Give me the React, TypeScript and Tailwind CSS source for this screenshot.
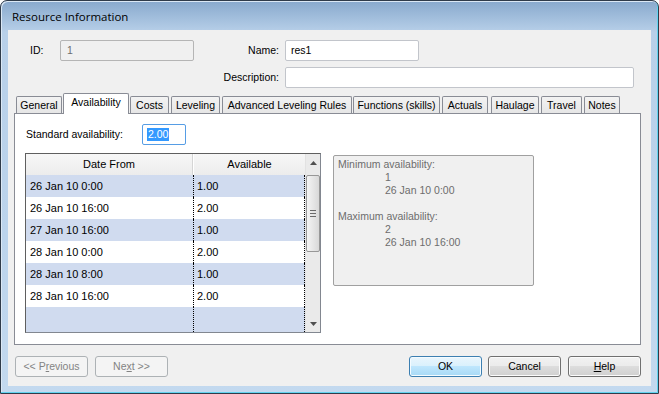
import React from 'react';

type Tab = { label: string; width: string; gap: string; active?: boolean };

const tabs: Tab[] = [
  { label: 'General', width: 'w-[46px]', gap: 'ml-[2px]' },
  { label: 'Availability', width: 'w-[66px]', gap: 'ml-[1px]', active: true },
  { label: 'Costs', width: 'w-[39px]', gap: 'ml-[1px]' },
  { label: 'Leveling', width: 'w-[49px]', gap: 'ml-[2px]' },
  { label: 'Advanced Leveling Rules', width: 'w-[130px]', gap: 'ml-[2px]' },
  { label: 'Functions (skills)', width: 'w-[87px]', gap: 'ml-[1px]' },
  { label: 'Actuals', width: 'w-[46px]', gap: 'ml-[2px]' },
  { label: 'Haulage', width: 'w-[48px]', gap: 'ml-[3px]' },
  { label: 'Travel', width: 'w-[41px]', gap: 'ml-[2px]' },
  { label: 'Notes', width: 'w-[36px]', gap: 'ml-[2px]' },
];

const rows = [
  { date: '26 Jan 10 0:00', value: '1.00' },
  { date: '26 Jan 10 16:00', value: '2.00' },
  { date: '27 Jan 10 16:00', value: '1.00' },
  { date: '28 Jan 10 0:00', value: '2.00' },
  { date: '28 Jan 10 8:00', value: '1.00' },
  { date: '28 Jan 10 16:00', value: '2.00' },
];

const btn =
  'w-[73px] h-[21px] rounded-[3px] border flex items-center justify-center text-[10.5px]';
const btnNormal =
  'border-[#707070] text-black bg-[linear-gradient(#f2f2f2,#ebebeb_50%,#dddddd_50%,#cfcfcf)] shadow-[inset_0_0_0_1px_#fbfbfb]';
const btnDefault =
  'border-[#3c7fb1] text-black bg-[linear-gradient(#eaf6fd,#d9f0fc_50%,#bee6fd_50%,#a7d9f5)] shadow-[inset_0_0_0_1px_#f4fbff]';
const btnDisabled = 'border-[#adb2b5] text-[#838383] bg-[#f4f4f4]';

function Arrow({ down }: { down?: boolean }) {
  return (
    <svg width="7" height="4" viewBox="0 0 7 4">
      <path d={down ? 'M0 0 L7 0 L3.5 4 Z' : 'M0 4 L3.5 0 L7 4 Z'} fill="#505050" />
    </svg>
  );
}

function Grid() {
  return (
    <div className="flex w-[296px] h-[180px] border border-[#828790] border-l-[#5f5f5f] border-t-[#5f5f5f] bg-white">
      <div className="flex flex-col w-[279px]">
        <div className="flex h-[21px] bg-[linear-gradient(#f7f7f7,#ececec)] text-[11px] text-black">
          <div className="w-[167px] flex items-center justify-center border-r border-[#d5d5d5]">Date From</div>
          <div className="flex-1 flex items-center justify-center border-l border-white">Available</div>
        </div>
        {rows.map((r, i) => (
          <div
            key={i}
            className={`flex h-[22px] text-[11px] text-black ${i % 2 === 0 ? 'bg-[#d0dbef]' : 'bg-white'}`}
          >
            <div className="w-[168px] pl-[4px] leading-[22px] border-r border-dotted border-black">{r.date}</div>
            <div className="flex-1 pl-[3px] leading-[22px] border-r border-dotted border-black">{r.value}</div>
          </div>
        ))}
        <div className="flex flex-1 bg-[#d0dbef]">
          <div className="w-[168px] border-r border-dotted border-black" />
          <div className="flex-1 border-r border-dotted border-black" />
        </div>
      </div>
      <div className="flex flex-col flex-1 bg-[#eaeaea] border-l border-[#e2e2e2]">
        <div className="h-[17px] flex items-center justify-center">
          <Arrow />
        </div>
        <div className="mt-[4px] mx-auto w-[14px] h-[77px] rounded-[2px] border border-[#979797] bg-[linear-gradient(90deg,#f4f4f4,#e6e6e6_50%,#d8d8d8)] flex flex-col items-center justify-center gap-[2px]">
          <div className="w-[6px] h-px bg-[#6a6a6a]" />
          <div className="w-[6px] h-px bg-[#6a6a6a]" />
          <div className="w-[6px] h-px bg-[#6a6a6a]" />
        </div>
        <div className="flex-1" />
        <div className="h-[17px] flex items-center justify-center">
          <Arrow down />
        </div>
      </div>
    </div>
  );
}

export default function App() {
  return (
    <div className="w-[659px] h-[394px] flex flex-col rounded-t-[7px] border border-[#2f3b4a] bg-[linear-gradient(#88a9cd,#b8d0e9_8%,#bcd4ec_60%,#c3d9ef)] shadow-[inset_-1px_-1px_0_#62d3ef,inset_1px_1px_0_#dbe8f5] font-['Liberation_Sans',Arial,sans-serif] overflow-hidden">
      <div className="h-[29px] flex items-center pl-[11px] pt-[2px] font-['Open_Sans',sans-serif] text-[11.5px] text-black">
        Resource Information
      </div>

      <div className="flex-1 mx-[7px] mb-[7px] bg-[#f0f0f0] flex flex-col text-[10.5px] text-black">
        <div className="flex items-center h-[21px] mt-[10px]">
          <div className="ml-[22px] w-[30px]">ID:</div>
          <div className="w-[134px] h-[21px] rounded-[2px] border border-[#b5b5b5] bg-[#f0f0f0] pl-[6px] leading-[19px] text-[#6d6d6d]">
            1
          </div>
          <div className="w-[91px] text-right pr-[6px]">Name:</div>
          <div className="w-[134px] h-[21px] rounded-[2px] border border-[#c2c5cb] bg-white pl-[5px] leading-[19px]">res1</div>
        </div>

        <div className="flex items-center h-[21px] mt-[6px]">
          <div className="w-[277px] text-right pr-[6px]">Description:</div>
          <div className="w-[349px] h-[21px] rounded-[2px] border border-[#c2c5cb] bg-white" />
        </div>

        <div className="ml-[6px] mt-[5px] w-[627px]">
          <div className="flex items-end h-[20px]">
            {tabs.map((t) =>
              t.active ? (
                <div
                  key={t.label}
                  className={`${t.width} ${t.gap} h-[21px] -mb-px relative z-10 bg-white border border-b-0 border-[#898c95] rounded-t-[2px] text-center leading-[17px]`}
                >
                  {t.label}
                </div>
              ) : (
                <div
                  key={t.label}
                  className={`${t.width} ${t.gap} h-[17px] border border-b-0 border-[#898c95] rounded-t-[2px] bg-[linear-gradient(#f3f3f3,#e6e6e6)] text-center leading-[16px] whitespace-nowrap`}
                >
                  {t.label}
                </div>
              )
            )}
          </div>

          <div className="h-[232px] border border-[#898c95] bg-white flex flex-col">
            <div className="flex items-center h-[21px] mt-[10px] ml-[11px]">
              <div className="w-[116px]">Standard availability:</div>
              <div className="w-[44px] h-[21px] border border-[#569de5] rounded-[2px] bg-white flex items-center pl-[4px]">
                <span className="bg-[#3399ff] text-white leading-[13px] px-px">2.00</span>
              </div>
            </div>

            <div className="flex mt-[8px] ml-[10px]">
              <Grid />
              <div className="ml-[12px] mt-[2px] w-[201px] h-[131px] rounded-[2px] border border-[#a0a0a0] bg-[#f0f0f0] pl-[4px] pt-[2px] leading-[13px] text-[#6d6d6d]">
                <div>Minimum availability:</div>
                <div className="pl-[47px]">1</div>
                <div className="pl-[47px]">26 Jan 10 0:00</div>
                <div className="h-[13px]" />
                <div>Maximum availability:</div>
                <div className="pl-[47px]">2</div>
                <div className="pl-[47px]">26 Jan 10 16:00</div>
              </div>
            </div>
          </div>
        </div>

        <div className="flex ml-[7px] mt-[11px] w-[626px]">
          <div className={`${btn} ${btnDisabled}`}>
            &lt;&lt; P<span className="underline">r</span>evious
          </div>
          <div className={`${btn} ${btnDisabled} ml-[7px]`}>
            Ne<span className="underline">x</span>t &gt;&gt;
          </div>
          <div className="flex-1" />
          <div className={`${btn} ${btnDefault}`}>OK</div>
          <div className={`${btn} ${btnNormal} ml-[6px]`}>Cancel</div>
          <div className={`${btn} ${btnNormal} ml-[7px]`}>
            <span className="underline">H</span>elp
          </div>
        </div>
      </div>
    </div>
  );
}
